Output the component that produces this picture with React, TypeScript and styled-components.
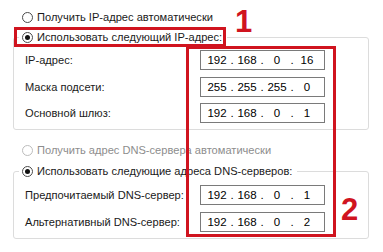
import React from 'react';
import styled, { createGlobalStyle } from 'styled-components';

const GlobalStyle = createGlobalStyle`
  html, body {
    margin: 0;
    padding: 0;
    background: #ffffff;
  }
  body {
    font-family: 'Liberation Sans', Arial, sans-serif;
    font-size: 11.1px;
    color: #1a1a1a;
  }
`;

const Page = styled.div`
  position: relative;
  width: 383px;
  height: 252px;
  box-sizing: border-box;
  padding: 10px 0 0 13px;
  overflow: hidden;
`;

const RadioRow = styled.label<{ $disabled?: boolean; $gapTop?: number }>`
  display: flex;
  align-items: center;
  gap: 4px;
  height: 14px;
  padding-left: 9px;
  margin-top: ${(p) => p.$gapTop ?? 0}px;
  color: ${(p) => (p.$disabled ? '#8d8d8d' : '#1a1a1a')};
  white-space: nowrap;
`;

const RadioDot = styled.span<{ $checked?: boolean; $disabled?: boolean }>`
  position: relative;
  width: 11px;
  height: 11px;
  box-sizing: border-box;
  border-radius: 50%;
  border: 1px solid ${(p) => (p.$disabled ? '#bcbcbc' : '#4a4a4a')};
  background: #ffffff;
  flex-shrink: 0;

  &::after {
    content: '';
    display: ${(p) => (p.$checked ? 'block' : 'none')};
    position: absolute;
    left: 2px;
    top: 2px;
    width: 5px;
    height: 5px;
    border-radius: 50%;
    background: #111111;
  }
`;

const Group = styled.fieldset<{ $gapTop: number; $padTop: number }>`
  margin: ${(p) => p.$gapTop}px 0 0 0;
  padding: ${(p) => p.$padTop}px 0 6px 11px;
  width: 356px;
  box-sizing: border-box;
  min-width: 0;
  border: 1px solid #dcdcdc;
  border-radius: 3px;
  display: grid;
  grid-template-columns: 175px 125px;
  row-gap: 6.5px;
  align-items: center;
`;

const Legend = styled.legend`
  margin-left: -6px;
  padding: 0 5px 0 0;
  height: 14px;

  ${RadioRow} {
    padding-left: 3px;
  }
`;

const FieldLabel = styled.span`
  white-space: nowrap;
`;

const IpBox = styled.div`
  display: flex;
  align-items: center;
  height: 20px;
  box-sizing: border-box;
  border: 1px solid #7a7a7a;
  background: #ffffff;
  padding-left: 4px;
  color: #000000;
  font-size: 11.5px;
`;

const Octet = styled.span`
  width: 24px;
  text-align: center;
`;

const Dot = styled.span`
  width: 6px;
  text-align: center;
`;

const RedFrame = styled.div<{ $x: number; $y: number; $w: number; $h: number }>`
  position: absolute;
  left: ${(p) => p.$x}px;
  top: ${(p) => p.$y}px;
  width: ${(p) => p.$w}px;
  height: ${(p) => p.$h}px;
  box-sizing: border-box;
  border: 3px solid #d0141f;
  pointer-events: none;
`;

const Marker = styled.span<{ $x: number; $y: number }>`
  position: absolute;
  left: ${(p) => p.$x}px;
  top: ${(p) => p.$y}px;
  font-family: 'Liberation Sans', Arial, sans-serif;
  font-weight: bold;
  font-size: 31px;
  line-height: 31px;
  color: #d0141f;
`;

const Radio: React.FC<{ checked?: boolean; disabled?: boolean; gapTop?: number; children: React.ReactNode }> = ({
  checked,
  disabled,
  gapTop,
  children,
}) => (
  <RadioRow $disabled={disabled} $gapTop={gapTop}>
    <RadioDot $checked={checked} $disabled={disabled} />
    {children}
  </RadioRow>
);

const IpField: React.FC<{ value: string }> = ({ value }) => {
  const parts = value.split('.');
  return (
    <IpBox>
      {parts.map((part, i) => (
        <React.Fragment key={i}>
          <Octet>{part}</Octet>
          {i < parts.length - 1 && <Dot>.</Dot>}
        </React.Fragment>
      ))}
    </IpBox>
  );
};

const ipRows = [
  { label: 'IP-адрес:', value: '192.168.0.16' },
  { label: 'Маска подсети:', value: '255.255.255.0' },
  { label: 'Основной шлюз:', value: '192.168.0.1' },
];

const dnsRows = [
  { label: 'Предпочитаемый DNS-сервер:', value: '192.168.0.1' },
  { label: 'Альтернативный DNS-сервер:', value: '192.168.0.2' },
];

const App: React.FC = () => {
  return (
    <>
      <GlobalStyle />
      <Page>
        <Radio>Получить IP-адрес автоматически</Radio>
        <Group $gapTop={6} $padTop={6}>
          <Legend>
            <Radio checked>Использовать следующий IP-адрес:</Radio>
          </Legend>
          {ipRows.map((row) => (
            <React.Fragment key={row.label}>
              <FieldLabel>{row.label}</FieldLabel>
              <IpField value={row.value} />
            </React.Fragment>
          ))}
        </Group>
        <Radio disabled gapTop={13}>
          Получить адрес DNS-сервера автоматически
        </Radio>
        <Group $gapTop={7} $padTop={7}>
          <Legend>
            <Radio checked>Использовать следующие адреса DNS-серверов:</Radio>
          </Legend>
          {dnsRows.map((row) => (
            <React.Fragment key={row.label}>
              <FieldLabel>{row.label}</FieldLabel>
              <IpField value={row.value} />
            </React.Fragment>
          ))}
        </Group>

        <RedFrame $x={14} $y={27} $w={212} $h={20} />
        <RedFrame $x={186} $y={46} $w={150} $h={191} />
        <Marker $x={235} $y={6}>1</Marker>
        <Marker $x={341} $y={194}>2</Marker>
      </Page>
    </>
  );
};

export default App;
